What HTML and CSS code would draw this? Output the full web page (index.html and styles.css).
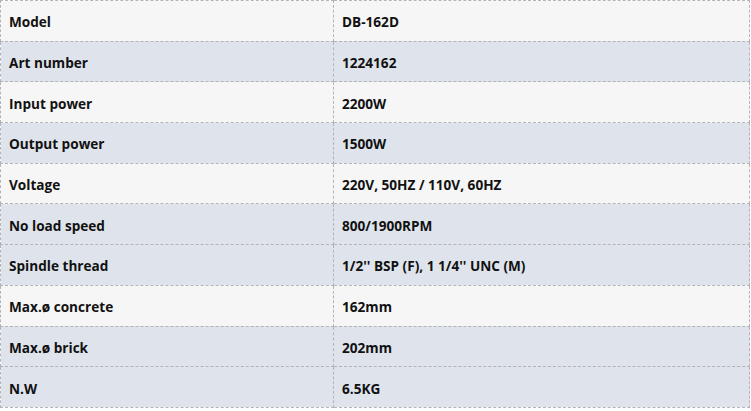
FILE: index.html
```html
<!DOCTYPE html>
<html>
<head>
<meta charset="utf-8">
<link rel="stylesheet" href="styles.css">
</head>
<body>
<table class="specs">
  <tr class="light"><td class="key">Model</td><td>DB-162D</td></tr>
  <tr class="blue"><td class="key">Art number</td><td>1224162</td></tr>
  <tr class="light"><td class="key">Input power</td><td>2200W</td></tr>
  <tr class="blue"><td class="key">Output power</td><td>1500W</td></tr>
  <tr class="light"><td class="key">Voltage</td><td>220V, 50HZ / 110V, 60HZ</td></tr>
  <tr class="blue"><td class="key">No load speed</td><td>800/1900RPM</td></tr>
  <tr class="blue"><td class="key">Spindle thread</td><td>1/2'' BSP (F), 1 1/4'' UNC (M)</td></tr>
  <tr class="light"><td class="key">Max.ø concrete</td><td>162mm</td></tr>
  <tr class="blue"><td class="key">Max.ø brick</td><td>202mm</td></tr>
  <tr class="blue"><td class="key">N.W</td><td>6.5KG</td></tr>
</table>
</body>
</html>
```
FILE: styles.css
```css
html, body {
  margin: 0;
  padding: 0;
  background: #ffffff;
}
.specs {
  border-collapse: collapse;
  width: 750px;
  font-family: "Open Sans", "Liberation Sans", sans-serif;
  font-weight: 700;
  font-size: 13.6px;
  color: #111111;
}
.specs td {
  border: 1px dashed #b4b4b8;
  height: 40.7px;
  padding: 2px 0 0 8px;
  vertical-align: middle;
  box-sizing: border-box;
}
.specs td.key {
  width: 333px;
}
.light td {
  background: #f6f6f6;
}
.blue td {
  background: #dfe4ec;
}
```
